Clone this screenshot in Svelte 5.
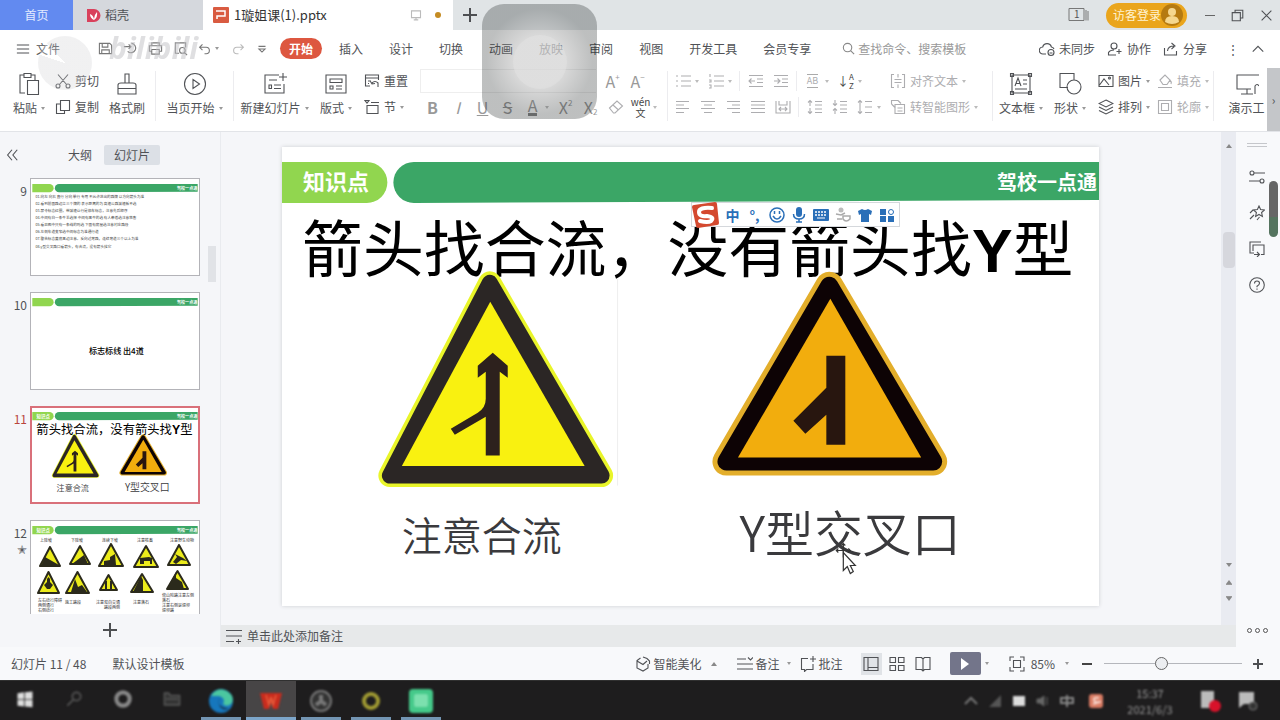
<script>
  let zoom = $state(41);
  let search = $state('');

  const menuTabs = ['插入', '设计', '切换', '动画', '放映', '审阅', '视图', '开发工具', '会员专享'];

  // Line icons, each drawn on a 16 or 24 unit grid.
  const icons = {
    menu: [16, 'M1 3.500h14M1 8h14M1 12.500h14'],
    save: [16, 'M1.500 2.500h11l2 2v9h-13zM4.500 2.500v4h6v-4M4 13.500v-4h8v4'],
    exportDoc: [16, 'M1 6h7M6 3.500L8.500 6 6 8.500M9 2.500a5 5 0 1 1-4 8.500'],
    print: [16, 'M4 5V2h8v3M4 11H1.500V5h13v6H12M4 9h8v5H4z'],
    preview: [16, 'M13.500 7V2h-11v11h4M13 10a3 3 0 1 1-6 0 3 3 0 0 1 6 0M12 12l3 3'],
    undo: [16, 'M2 6.500h8a4 4 0 0 1 0 8H8M5.500 3L2 6.500 5.500 10'],
    redo: [16, 'M14 6.500H6a4 4 0 0 0 0 8h2M10.500 3L14 6.500 10.500 10'],
    more: [16, 'M4 5h8M4.500 8L8 11.500 11.500 8z'],
    search: [16, 'M11.500 7a4.500 4.500 0 1 1-9 0 4.500 4.500 0 0 1 9 0M10.500 10.500L14 14'],
    cloud: [16, 'M7 13H4a3.500 3.500 0 0 1-.3-7 4.500 4.500 0 0 1 8.700 0A3 3 0 0 1 15 8M15 11.500a3 3 0 1 1-6 0 3 3 0 0 1 6 0M10.500 12h3'],
    people: [16, 'M10 5a3 3 0 1 1-6 0 3 3 0 0 1 6 0M9 14H1.500v-2.500Q3 9 7 9M12 8v5M9.500 10.500h5'],
    share: [16, 'M1.500 7v7h12v-4M4.500 10Q5 5 11 5M8.500 2L12 5 8.500 8'],
    up: [16, 'M2 11l6-6 6 6'],
    cut: [16, 'M3 1.500l8.500 10M13 1.500l-8.500 10M5 13a2 2 0 1 1-4 0 2 2 0 0 1 4 0M15 13a2 2 0 1 1-4 0 2 2 0 0 1 4 0'],
    copy: [16, 'M5.500 1.500h9v10h-9zM5.500 5h-4v9.500h8v-3'],
    reset: [16, 'M6 13H1.500V2h13v5M1.500 5h13M4 8h3M8 10q3-3 6 0v4M6.500 8.500L8 11l3-.5M4 10.500h1'],
    section: [16, 'M1 1.500h4L3 4zM7 3.500h8M3 6.500h11v8H3z'],
    bullets: [16, 'M6 3h10M6 8h10M6 13h10M1 3h2M1 8h2M1 13h2'],
    numbers: [16, 'M6 3h10M6 8h10M6 13h10M2 1v3M1 7h2v2H1M1 12h2v3H1'],
    outdent: [16, 'M1 2.500h14M9 6h6M9 9.500h6M1 13.500h14M1 8h6M3.500 5.500L1 8l2.500 2.500'],
    indent: [16, 'M1 2.500h14M9 6h6M9 9.500h6M1 13.500h14M1 8h6M4.500 5.500L7 8l-2.500 2.500'],
    left: [16, 'M1 2.500h13M1 6h8M1 9.500h13M1 13.500h8'],
    center: [16, 'M1 2.500h14M4 6h8M1 9.500h14M4 13.500h8'],
    right: [16, 'M2 2.500h13M7 6h8M2 9.500h13M7 13.500h8'],
    justify: [16, 'M1 2.500h14M1 6h14M1 9.500h14M1 13.500h14'],
    spread: [16, 'M1 2v12h14V2M4 2v4h8V2M4 10h8M6 8l-2 2 2 2M10 8l2 2-2 2'],
    lineUp: [16, 'M3 7V1.500M1 3.500l2-2 2 2M3 9v5.500M1 12.500l2 2 2-2M8 2.500h7M8 6h7M8 10h7M8 13.500h7'],
    lineDown: [16, 'M3 1v5.500M1 4.500l2 2 2-2M3 15V9.500M1 11.500l2-2 2 2M8 2.500h7M8 6h7M8 10h7M8 13.500h7'],
    lineBoth: [16, 'M3 1.500v13M1 3.500l2-2 2 2M1 12.500l2 2 2-2M8 2.500h7M8 8h7M8 13.500h7'],
    alignText: [16, 'M4 1.500H1.500v13H4M12 1.500h2.500v13H12M4.500 6.500h7M4.500 9.500h7M8 1v3.500M8 15v-3.500'],
    smart: [16, 'M1.500 5V1.500h7M1.500 5l4 4M5 5.500h9.500v9H5zM7.500 9h5M7.500 12h5M8 1.500l3 3'],
    picture: [16, 'M1 2.500h14v11H1zM1.500 12l4.500-6 5 6M11.500 6.500h.1M12.500 5a1 1 0 1 1-2 0 1 1 0 0 1 2 0'],
    layers: [16, 'M8 1l7 3.500-7 3.500-7-3.500zM1 8l7 3.500L15 8M1 11.500L8 15l7-3.500'],
    fill: [16, 'M3 7l5-5 5 5-3 4.500H6zM1 14.500h14M13 7q2 2 1 4'],
    outline: [16, 'M1.500 1.500h13v13h-13zM4.500 4.500h7v7h-7z'],
    paste: [24, 'M8 21H3V3h4M14 3h4v5M7 1.500h7v4H7zM10.500 8.500h11v14h-11z'],
    brush: [24, 'M10 11V2h4v9M3 22V13q0-2 3-2h12q3 0 3 2v9zM3 16.500h18'],
    play: [24, 'M22.500 12a10.500 10.500 0 1 1-21 0 10.500 10.500 0 0 1 21 0M10 7.500l6.500 4.500-6.500 4.500z'],
    newSlide: [24, 'M16 3H2v18h19v-9M20 1v8M16 5h8M6 8h8M6 13h2.500v3.500H6zM11 13h7M11 16.500h7'],
    layout: [24, 'M2 3h20v18H2zM6 7h12v3.500H6zM6 14h3v3H6zM12 14h6M12 17h6'],
    textbox: [24, 'M3 3h18v18H3zM1.500 1.500h3v3h-3zM19.500 1.500h3v3h-3zM1.500 19.500h3v3h-3zM19.500 19.500h3v3h-3zM6 14l3-8 3 8M7 11.500h4M14 8h4M14 12h4M6 17h12'],
    shapes: [24, 'M10 15.500H2v-14h14v6M23 15a7 7 0 1 1-14 0 7 7 0 0 1 14 0'],
    screen: [24, 'M24 3H2v14h14M12 17v5M6 22h12M20 22v-8q2-3 4 0'],
    sliders: [16, 'M5 4h11M0 12h11M5 4a2 2 0 1 1-4 0 2 2 0 0 1 4 0M15 12a2 2 0 1 1-4 0 2 2 0 0 1 4 0'],
    star: [16, 'M10 1l1.600 3.500 3.900.4-2.900 2.600.8 3.900L10 9.500l-3.400 1.900.8-3.900-2.900-2.600 3.900-.4zM1 8l3-3M1 14l4-4M8 15l2.500-3'],
    transfer: [16, 'M5 12H1V1h11M12 13.500h3V4H4v6M5 13.500h5M8 11l2.500 2.500L8 16'],
    help: [16, 'M15.300 8A7.300 7.300 0 1 1 .7 8a7.300 7.300 0 0 1 14.600 0M5.500 6.500Q5.500 4 8 4t2.500 2.300Q10.500 8 8 9.200v1M8 11.500v1.200'],
    magic: [16, 'M5.500 2L2 4.500V12l6 3 5-3V8M2 5l6 3.500L12 5M8 1l4 1.500L14.500 5v3'],
    notes: [16, 'M0 3h9M0 8h16M0 13h16M11 1.500l2.500 2.500L16 1.500'],
    comment: [16, 'M8 2.500H1.500v11h3v2l2-2H13V8M13 0v6M10 3h6'],
    normal: [16, 'M1 1.500h14v13H1zM5 1.500v13M5 11.500h10'],
    grid: [16, 'M1 1.500h5.500v5H1zM9.500 1.500H15v5H9.500zM1 9.500h5.500v5H1zM9.500 9.500H15v5H9.500z'],
    book: [16, 'M8 3v12M8 3L6.500 1.500H1v12h5.500L8 15l1.500-1.500H15v-12H9.500z'],
    fit: [16, 'M1 5V1h4M11 1h4v4M15 11v4h-4M5 15H1v-4M4.500 4.500h7v7h-7z'],
    addNote: [16, 'M0 2.500h16M0 8h16M0 13.500h8M12.500 11v5M10 13.500h5'],
    monitor: [16, 'M2 2.500h12v9H2zM8 11.500v3M5 14.500h6'],
    double: [16, 'M8 2L3 8l5 6M14 2L9 8l5 6'],
    windows: [16, 'M5 4V1.500h9.500V11H12M1.500 4.500h10v10h-10z'],
    close: [16, 'M2 2l12 12M14 2L2 14'],
    eraser: [16, 'M1.500 9l7.500-7 5.500 5-7.500 7H5.500zM5 6l5.500 5']
  };

  const thumbLines = [
    '01.向左 向右 直行 分向 单行 专用 不允许进出的路牌 以方向箭头为准',
    '02.看到前面路边立三个牌的 表示距离的为 高速公路减速板不选',
    '03.禁令标志红圈，带减速让行是停车标志，注意先后顺序',
    '04.中间有白一条牛羊选择 中间有黑牛的选 有人牵着选注意牲畜',
    '05.看见图中只有一条线的则选 下面有房屋选注意村庄路段',
    '06.左侧车道变窄选中间标志为准通行道',
    '07.警告标志黄底黑边注意。反向过弯路，连续弯道三个以上为准',
    '08.y型交叉路口看箭头，有合流，没有箭头找它'
  ];

  // left, right, top, bottom, pictogram
  const miniSigns = [
    [39, 63, 545, 568, 'M42 566l4-9 14 8v1z'],
    [69, 93, 544, 566, 'M73 564l12-9 4 9z'],
    [98, 126, 542, 568, 'M105 565v-4l6-1v-3l5-3 1 11z'],
    [133, 161, 544, 569, 'M141 564v-6l9-1 3 1v6h-2v-3h-6v3z'],
    [167, 193, 543, 567, 'M174 562l4-5-2-3 8 4 4 3-6-1-5 4z'],
    [37, 62, 570, 595, 'M48 579l1.500-2 1.500 2v3l3 3-3 4h-3l-3-4 3-3z'],
    [65, 92, 570, 595, 'M72 592l4-13 3 8 4-2 5 7z'],
    [99, 120, 573, 592, 'M106 589v-8h2v8zM111 589v-8h2v8z'],
    [130, 156, 572, 594, 'M134 592l8-16 2 4v12z'],
    [166, 191, 569, 591, 'M177 572v6l6 4 2 7h-17z']
  ];
  const miniCaptions = [
    [41, 542, '上陡坡'], [72, 542, '下陡坡'], [103, 542, '连续下坡'], [138, 542, '注意牲畜'], [171, 542, '注意野生动物'],
    [39, 602, '左右绕行障碍'], [39, 607, '两侧通行'], [39, 612, '右侧绕行'],
    [66, 604, '施工路段'], [97, 604, '注意双向交通'], [105, 609, '路段两侧'], [134, 604, '注意落石'],
    [163, 597, '傍山险路注意左侧'], [163, 602, '落石'], [163, 607, '注意右侧是堤坝'], [163, 612, '堤坝路']
  ];
</script>

{#snippet icon(name, size = 16)}
  <svg class="icon" width={size} height={size} viewBox="0 0 {icons[name][0]} {icons[name][0]}" aria-hidden="true"><path d={icons[name][1]} /></svg>
{/snippet}

{#snippet caret()}<i class="caret"></i>{/snippet}

{#snippet header(label)}
  <path d="M0 15h85a20 20 0 0 1 0 41H0z" fill="#91d64f" />
  <path d="M818 15H132a20.500 20.500 0 0 0 0 41l686-3z" fill="#3ba666" />
  {#if label}<text x="21" y="43" class="band" font-size="22">知识点</text>{/if}
  <text x="716" y="43" class="band" font-size="20">驾校一点通</text>
{/snippet}

{#snippet currentSlide()}
  {@render header(true)}
  <text x="20" y="125" class="title" font-size="61">箭头找合流，没有箭头找<tspan class="latin">Y</tspan>型</text>
  <g stroke-linejoin="round">
    <path d="M208 136L108 329h212z" fill="#e9f52a" stroke="#e9f52a" stroke-width="23" />
    <path d="M208 136L108 329h212z" fill="#2b2625" stroke="#2b2625" stroke-width="16" />
    <path d="M208.500 155L120 319.500h183z" fill="#f9f110" />
    <path d="M211 206l15 13v12l-8-6v84h-14v-39l-31 18-4-6 27-16q8-5 8-14v-27l-8 6v-12z" fill="#2d211d" />
    <path d="M548 139L445 315h207z" fill="#e3ae2b" stroke="#e3ae2b" stroke-width="28" />
    <path d="M548 139L445 315h207z" fill="#0d0305" stroke="#0d0305" stroke-width="18" />
    <path d="M549 152L456.500 311H640z" fill="#f2ad0d" />
    <path d="M545 209h19v89h-19v-30l-21 19-12-13 33-33z" fill="#28160f" />
  </g>
  <text x="120" y="404" class="caption" font-size="40">注意合流</text>
  <text x="458" y="405" class="caption" font-size="49">Y型交叉口</text>
{/snippet}

<div class="window">
  <header class="tabbar">
    <a class="home" href="#home">首页</a>
    <a class="docker" href="#docker">
      <svg width="14" height="14" viewBox="0 0 14 14" aria-hidden="true"><path d="M0 1h7a6.500 6.500 0 0 1 0 13H0z" fill="#d9415c" /><path d="M7 12Q3 10 3 6q3 1 4 5 0-4 3-7 1 5-3 8" fill="#fff" /></svg>
      稻壳
    </a>
    <a class="doc" href="#doc">
      <svg width="16" height="16" viewBox="0 0 16 16" aria-hidden="true"><rect width="16" height="16" rx="1" fill="#d95b41" /><path d="M3 4h9v5H4v3" fill="none" stroke="#fff" stroke-width="1.500" /></svg>
      <span>1璇姐课(1).pptx</span>
      <span class="pale">{@render icon('monitor', 12)}</span>
      <i class="dirty"></i>
    </a>
    <button class="add" aria-label="新建标签"></button>
    <div class="system">
      <svg width="22" height="16" viewBox="0 0 22 16" aria-hidden="true"><path d="M1 1.500h15v12H1zM18 3v10.500M20 4v9.500" fill="none" stroke="#777" /><text x="6" y="11" font-size="10" fill="#555">1</text></svg>
      <button class="login">访客登录
        <svg width="22" height="22" viewBox="0 0 22 22" aria-hidden="true"><circle cx="11" cy="11" r="11" fill="#b57a10" /><circle cx="11" cy="8" r="4" fill="#f5d78e" /><path d="M4 18q0-6 7-6t7 6q-7 4-14 0" fill="#f5d78e" /></svg>
      </button>
      <button aria-label="最小化"><i class="minus"></i></button>
      <button aria-label="还原">{@render icon('windows', 13)}</button>
      <button aria-label="关闭">{@render icon('close', 13)}</button>
    </div>
  </header>

  <nav class="menubar">
    <button class="file">{@render icon('menu', 14)}文件</button>
    <div class="quick">
      <button aria-label="保存">{@render icon('save', 15)}</button>
      <button aria-label="输出">{@render icon('exportDoc', 15)}</button>
      <button aria-label="打印">{@render icon('print', 15)}</button>
      <button aria-label="预览">{@render icon('preview', 15)}</button>
      <button aria-label="撤销">{@render icon('undo', 13)}</button>
      {@render caret()}
      <button class="pale" aria-label="恢复">{@render icon('redo', 13)}</button>
      <button aria-label="更多">{@render icon('more', 14)}</button>
    </div>
    <div class="tabs">
      <button class="start">开始</button>
      {#each menuTabs as tab}<button>{tab}</button>{/each}
    </div>
    <label class="find">{@render icon('search', 15)}<input bind:value={search} placeholder="查找命令、搜索模板" aria-label="查找命令" /></label>
    <div class="account">
      <button>{@render icon('cloud')}未同步</button>
      <button>{@render icon('people')}协作</button>
      <button>{@render icon('share')}分享</button>
      <button aria-label="选项">⋮</button>
      <button aria-label="收起">{@render icon('up', 14)}</button>
    </div>
  </nav>

  <section class="ribbon" aria-label="开始">
    <button class="big w40">{@render icon('paste', 24)}<span>粘贴{@render caret()}</span></button>
    <div class="stack">
      <button>{@render icon('cut')}剪切</button>
      <button>{@render icon('copy')}复制</button>
    </div>
    <button class="big w54">{@render icon('brush', 24)}<span>格式刷</span></button>
    <hr />
    <button class="big w76">{@render icon('play', 24)}<span>当页开始{@render caret()}</span></button>
    <hr />
    <button class="big w78">{@render icon('newSlide', 24)}<span>新建幻灯片{@render caret()}</span></button>
    <button class="big w46">{@render icon('layout', 24)}<span>版式{@render caret()}</span></button>
    <div class="stack">
      <button>{@render icon('reset')}重置</button>
      <button>{@render icon('section')}节{@render caret()}</button>
    </div>
    <div class="rows font off">
      <div>
        <select aria-label="字体"><option></option></select>
        <button class="cell letter">A<sup>+</sup></button>
        <button class="cell letter">A<sup>−</sup></button>
      </div>
      <div>
        <button class="cell letter"><b>B</b></button>
        <button class="cell letter"><em>I</em></button>
        <button class="cell letter"><u>U</u></button>
        <button class="cell letter"><s>S</s></button>
        <button class="cell letter"><span class="tint">A</span></button>{@render caret()}
        <button class="cell letter">X<sup>2</sup></button>
        <button class="cell letter">X<sub>2</sub></button>
        <button class="cell" aria-label="清除格式">{@render icon('eraser')}</button>
        <button class="cell pinyin"><span>wén</span><span>文</span></button>{@render caret()}
      </div>
    </div>
    <hr />
    <div class="rows off">
      <div>
        <button class="cell" aria-label="项目符号">{@render icon('bullets')}</button>{@render caret()}
        <button class="cell" aria-label="编号">{@render icon('numbers')}</button>{@render caret()}
        <hr />
        <button class="cell" aria-label="减少缩进">{@render icon('outdent')}</button>
        <button class="cell" aria-label="增加缩进">{@render icon('indent')}</button>
        <hr />
        <button class="cell"><span class="ab">AB</span></button>{@render caret()}
        <button class="cell dark">↓<span class="az">A<br />Z</span></button>{@render caret()}
      </div>
      <div>
        <button class="cell" aria-label="左对齐">{@render icon('left')}</button>
        <button class="cell" aria-label="居中">{@render icon('center')}</button>
        <button class="cell" aria-label="右对齐">{@render icon('right')}</button>
        <button class="cell" aria-label="两端对齐">{@render icon('justify')}</button>
        <button class="cell" aria-label="分散对齐">{@render icon('spread')}</button>
        <hr />
        <button class="cell" aria-label="增大行距">{@render icon('lineUp')}</button>
        <button class="cell" aria-label="减小行距">{@render icon('lineDown')}</button>
        <button class="cell" aria-label="行距">{@render icon('lineBoth')}</button>{@render caret()}
      </div>
    </div>
    <div class="stack off convert">
      <button>{@render icon('alignText')}对齐文本{@render caret()}</button>
      <button>{@render icon('smart')}转智能图形{@render caret()}</button>
    </div>
    <hr />
    <button class="big w54">{@render icon('textbox', 24)}<span>文本框{@render caret()}</span></button>
    <button class="big w46">{@render icon('shapes', 24)}<span>形状{@render caret()}</span></button>
    <div class="stack">
      <button>{@render icon('picture')}图片{@render caret()}</button>
      <button>{@render icon('layers')}排列{@render caret()}</button>
    </div>
    <div class="stack off">
      <button>{@render icon('fill')}填充{@render caret()}</button>
      <button>{@render icon('outline')}轮廓{@render caret()}</button>
    </div>
    <hr />
    <button class="big cropped">{@render icon('screen', 24)}<span>演示工</span></button>
    <button class="scroll-next" aria-label="向右">›</button>
  </section>

  <main class="workspace">
    <aside class="side">
      <div class="side-head">
        <button aria-label="折叠">{@render icon('double', 14)}</button>
        <button class="outline-tab">大纲</button>
        <button class="active">幻灯片</button>
      </div>
      <div class="thumbs">
        <div class="row"><span class="num">9</span>
          <svg class="thumb" viewBox="0 0 818 460">
            {@render header(false)}
            {#each thumbLines as line, i}<text x="16" y={84 + i * 35} font-size="18" fill="#444">{line}</text>{/each}
          </svg>
        </div>
        <div class="row"><span class="num">10</span>
          <svg class="thumb" viewBox="0 0 818 460">
            {@render header(false)}
            <text x="280" y="290" font-size="40" font-weight="500">标志标线 出4道</text>
          </svg>
        </div>
        <div class="row current"><span class="num">11</span>
          <svg class="thumb" viewBox="0 0 818 460">{@render currentSlide()}</svg>
        </div>
        <div class="row"><span class="num">12<br />✭</span>
          <svg class="thumb" viewBox="33 523 166 93">
            <svg x="33" y="523" width="166" height="93" viewBox="0 0 818 460">{@render header(true)}</svg>
            {#each miniSigns as [l, r, t, b, d]}
              <path d="M{(l + r) / 2} {t + 2}L{l + 2} {b - 2}H{r - 2}z" fill="#ecec1c" stroke="#2b2a1c" stroke-width="2" stroke-linejoin="round" />
              <path {d} fill="#2b2a1c" />
            {/each}
            {#each miniCaptions as [x, y, t]}<text {x} {y} font-size="4" fill="#333">{t}</text>{/each}
          </svg>
        </div>
        <i class="side-scroll"></i>
      </div>
      <button class="new-slide add" aria-label="新建幻灯片"></button>
    </aside>

    <section class="editor">
      <div class="canvas">
        <div class="stage">
          <div class="slide">
            <svg viewBox="0 0 818 460">
              {@render currentSlide()}
              <path d="M336 132v207" stroke="#eee" />
              <g stroke="#333" fill="#fff" stroke-width="1.200">
                <path d="M555 404h14M562 397v14M557 402l-2 2 2 2M567 402l2 2-2 2M560 399l2-2 2 2" fill="none" />
                <path d="M562 406v18l4-4 3 7 3-2-3-6h5z" />
              </g>
            </svg>
            <div class="ime" role="toolbar" aria-label="输入法">
              <svg class="sogou" width="28" height="28" viewBox="0 0 28 28" aria-hidden="true"><path d="M2 4L23 1q2 0 2 2l2 19q0 2-2 2L6 27q-2 0-2-2L0 6q0-2 2-2z" fill="#d4492f" /><path d="M20 7Q7 6 7 11t8 4q8 1 4 5-3 2-11 0" fill="none" stroke="#fff" stroke-width="4" stroke-linecap="round" /></svg>
              <b>中</b>
              <b>°,</b>
              <svg width="16" height="16" viewBox="0 0 16 16"><circle cx="8" cy="8" r="7" fill="none" stroke="#2a6fb8" stroke-width="1.500" /><path d="M4 9q4 6 8 0M5.500 4v3M10.500 4v3" fill="none" stroke="#2a6fb8" stroke-width="1.500" /></svg>
              <svg width="16" height="16" viewBox="0 0 16 16"><rect x="5" width="6" height="10" rx="3" fill="#2a6fb8" /><path d="M2.500 7q0 5 5.500 5t5.500-5M8 12v3M5 15h6" fill="none" stroke="#2a6fb8" stroke-width="1.500" /></svg>
              <svg width="16" height="16" viewBox="0 0 16 16"><rect y="2" width="16" height="12" rx="1" fill="#2a6fb8" /><path d="M2 5h12M2 8h12" stroke="#fff" stroke-dasharray="2 1" stroke-width="1.500" /><path d="M4 11h8" stroke="#fff" /></svg>
              <svg width="16" height="16" viewBox="0 0 16 16"><circle cx="6" cy="3" r="2.500" fill="#bbb" /><path d="M1 7l5 1 4-2M2 12h5M8 9h7v3q-4 4-7 0z" fill="none" stroke="#aaa" stroke-width="1.500" /></svg>
              <svg width="16" height="16" viewBox="0 0 16 16"><path d="M5 2q3 2 6 0l4 2-1 4-2-1v8H4V7L2 8 1 4z" fill="#2a6fb8" /></svg>
              <svg width="16" height="16" viewBox="0 0 16 16"><path d="M1 2h6v6H1zM1 9h6v6H1zM9 9h6v6H9z" fill="#2a6fb8" /><circle cx="12" cy="5" r="2.500" fill="none" stroke="#2a6fb8" /></svg>
            </div>
          </div>
        </div>
        <div class="vscroll"><i class="tri"></i><i class="knob"></i><span><i class="tri down"></i><i class="tri pair"></i><i class="tri down pair"></i></span></div>
      </div>
      <button class="notes">{@render icon('addNote')}单击此处添加备注</button>
    </section>

    <aside class="rail">
      <i class="grip"></i>
      <button aria-label="对象属性">{@render icon('sliders')}</button>
      <button aria-label="动画窗格">{@render icon('star')}</button>
      <button aria-label="切换窗格">{@render icon('transfer')}</button>
      <button aria-label="帮助">{@render icon('help')}</button>
      <button class="dots" aria-label="更多"><i></i><i></i><i></i></button>
      <span class="edge-scroll"></span>
    </aside>
  </main>

  <footer class="status">
    <span>幻灯片 11 / 48</span>
    <span class="template">默认设计模板</span>
    <div class="status-tools">
      <button class="beauty">{@render icon('magic')}智能美化<i class="tri"></i></button>
      <button>{@render icon('notes')}备注{@render caret()}</button>
      <button class="remarks">{@render icon('comment')}批注</button>
      <button class="view on" aria-label="普通视图">{@render icon('normal')}</button>
      <button class="view" aria-label="幻灯片浏览">{@render icon('grid')}</button>
      <button class="view" aria-label="阅读视图">{@render icon('book')}</button>
      <button class="present" aria-label="放映"><svg width="10" height="12" viewBox="0 0 10 12"><path d="M1 0l8 6-8 6z" fill="#fff" /></svg></button>{@render caret()}
      <button class="fit">{@render icon('fit')}85%{@render caret()}</button>
      <button aria-label="缩小"><i class="minus bold"></i></button>
      <input type="range" min="0" max="100" bind:value={zoom} aria-label="缩放" />
      <button class="add small" aria-label="放大"></button>
    </div>
  </footer>

  <footer class="taskbar">
    <button aria-label="开始菜单"><svg viewBox="0 0 24 24"><path d="M3 5l8-1v8H3zM12 4l9-1v9h-9zM3 13h8v8l-8-1zM12 13h9v9l-9-1z" fill="#ddd" /></svg></button>
    <button aria-label="搜索"><svg viewBox="0 0 24 24"><path d="M4 20l7-7M20 9a5 5 0 1 1-10 0 5 5 0 0 1 10 0" fill="none" stroke="#555" stroke-width="2" /></svg></button>
    <button aria-label="助手"><svg viewBox="0 0 24 24"><circle cx="12" cy="12" r="8" fill="none" stroke="#888" stroke-width="5" /></svg></button>
    <button aria-label="任务视图"><svg viewBox="0 0 24 24"><path d="M3 5h5l2 3h11v11H3zM5 12h14" fill="#333" stroke="#555" stroke-width="2" /></svg></button>
    <button class="run" aria-label="浏览器"><svg viewBox="0 0 24 24"><circle cx="12" cy="12" r="12" fill="#1677bd" /><path d="M2 7Q8-3 18 2q8 5 5 12-5 5-9 1 3-6-4-8-5 0-8 0" fill="#4bc7a0" /><path d="M11 9q-4 5 2 9 4 2 7 1-2 2-6 1-7-4-3-11" fill="#1b2731" /></svg></button>
    <button class="run front" aria-label="演示"><svg viewBox="0 0 24 24"><path d="M1 4h22l-4 16h-5l-2-6-2 6H5z" fill="#c92b1d" /><path d="M7 6l3 10 2-8 2 8 3-10" fill="none" stroke="#e8603e" stroke-width="1.500" /></svg></button>
    <button class="run" aria-label="录屏"><svg viewBox="0 0 24 24"><circle cx="12" cy="12" r="10" fill="#333" stroke="#777" stroke-width="2" /><path d="M12 6v6l-5 4M12 12l5 4" stroke="#777" stroke-width="4" /></svg></button>
    <button class="run" aria-label="音乐"><svg viewBox="0 0 24 24"><circle cx="12" cy="12" r="7" fill="none" stroke="#a09a32" stroke-width="4" /></svg></button>
    <button class="run" aria-label="应用"><svg viewBox="0 0 24 24"><rect width="24" height="24" rx="4" fill="#45c98a" /><rect x="5" y="5" width="14" height="13" rx="2" fill="#7ce0ae" /></svg></button>
    <div class="tray">
      <svg viewBox="0 0 16 16"><path d="M2 11l6-6 6 6" fill="none" stroke="#777" stroke-width="2" /></svg>
      <svg viewBox="0 0 16 16"><path d="M2 14L14 2v12z" fill="#555" /></svg>
      <svg viewBox="0 0 16 16"><rect x="2" y="3" width="12" height="10" fill="#ddd" /></svg>
      <svg viewBox="0 0 16 16"><path d="M2 6h3l4-3v10l-4-3H2zM12 4v8" fill="#666" stroke="#666" /></svg>
      <svg viewBox="0 0 16 16"><path d="M2 5h12v5H2zM8 2v12" fill="none" stroke="#888" stroke-width="2" /></svg>
      <svg class="gap" viewBox="0 0 16 16"><rect x="1" y="1" width="14" height="14" rx="3" fill="#d97b63" /><path d="M11 5Q5 4 6 7t5 2-6 2" fill="none" stroke="#f6d5cb" stroke-width="2" /></svg>
      <div class="clock"><span>15:37</span><span>2021/6/3</span></div>
      <svg class="wide" viewBox="0 0 24 24"><rect x="2" y="2" width="13" height="17" fill="#bbb" /><circle cx="16" cy="17" r="6" fill="#d8122a" /></svg>
      <svg class="wide" viewBox="0 0 24 24"><path d="M3 3h15v12H8l-5 4z" fill="#bbb" /><circle cx="17" cy="17" r="4" fill="#333" stroke="#777" /></svg>
    </div>
  </footer>

  <div class="watermark" aria-hidden="true"><i></i><span>bilibili</span></div>
  <div class="assist" aria-hidden="true"><i></i></div>
</div>

<style>
  :global(body) { margin: 0; overflow: hidden; }
  .window {
    position: relative;
    display: flex;
    flex-direction: column;
    height: 100vh;
    overflow: hidden;
    font: 12px/16px "Noto Sans CJK SC", sans-serif;
    color: #505256;
    background: #f5f6f9;
  }
  button, input, select { font: inherit; color: inherit; background: none; border: 0; padding: 0; margin: 0; }
  button { display: inline-flex; align-items: center; justify-content: center; white-space: nowrap; flex: none; }
  a { color: inherit; text-decoration: none; }
  svg { flex: none; display: block; }
  .icon { fill: none; stroke: currentColor; stroke-width: 1.1; }
  .icon path { vector-effect: non-scaling-stroke; }
  .pale { color: #bbb; }
  .caret { flex: none; width: 0; height: 0; border: 2px solid transparent; border-top: 3px solid #999; border-bottom: 0; margin: 0 0 0 4px; }
  .minus { width: 10px; height: 1px; background: #666; }
  .minus.bold { height: 2px; background: #444; }
  .add {
    width: 14px; height: 14px;
    background: linear-gradient(#4d4f52, #4d4f52) center / 100% 2px no-repeat, linear-gradient(#4d4f52, #4d4f52) center / 2px 100% no-repeat;
  }
  .add.small { width: 10px; height: 10px; }
  hr { flex: none; width: 1px; height: 20px; margin: 0 4px; border: 0; background: #ececef; }

  .tabbar { display: flex; align-items: center; flex: none; height: 30px; background: #e0e4e6; }
  .home, .docker, .doc { display: flex; align-items: center; height: 100%; box-sizing: border-box; }
  .home { width: 73px; justify-content: center; background: #628af0; color: #e4ebff; }
  .docker { width: 130px; padding-left: 14px; gap: 4px; background: #d5d8dd; }
  .doc { width: 250px; padding: 0 12px 0 10px; gap: 5px; background: #fff; color: #333; margin-right: 10px; font-size: 13px; }
  .doc .pale { margin-left: auto; margin-right: 8px; }
  .dirty { width: 6px; height: 6px; border-radius: 50%; background: #c58c23; }
  .system { display: flex; align-items: center; gap: 16px; margin-left: auto; padding-right: 7px; }
  .login { height: 25px; padding: 0 4px 0 7px; margin-right: 2px; border-radius: 13px; background: #eaa51c; color: #fff3cf; }

  .menubar { display: flex; align-items: center; flex: none; height: 37px; background: #fff; padding: 0 15px 0 16px; box-sizing: border-box; }
  .file { gap: 6px; }
  .quick { display: flex; align-items: center; gap: 10px; margin-left: 38px; color: #777; }
  .quick .caret { margin: 0 3px 0 -6px; }
  .tabs { display: flex; align-items: center; gap: 26px; margin-left: 11px; }
  .start { height: 21px; padding: 0 9px; margin-right: -9px; border-radius: 11px; background: #dd5740; color: #fff; font-weight: 700; }
  .find { display: flex; align-items: center; gap: 2px; margin-left: 30px; color: #888; }
  .find input { width: 120px; outline: 0; }
  .find input::placeholder { color: #999; opacity: 1; }
  .account { display: flex; align-items: center; gap: 12px; margin-left: auto; }
  .account button { gap: 4px; }
  .account button:nth-child(4) { margin-left: 8px; }

  .ribbon { display: flex; align-items: flex-start; flex: none; height: 65px; padding: 2px 0 0 8px; box-sizing: border-box; background: #fff; border-bottom: 1px solid #e2e4e8; overflow: hidden; }
  .ribbon > hr { height: 50px; margin: 2px 2px 0; }
  .big { flex-direction: column; gap: 4px; padding-top: 3px; }
  .big span { display: flex; align-items: center; }
  .w40 { width: 42px; }
  .w46 { width: 46px; }
  .w54 { width: 52px; }
  .w76 { width: 73px; }
  .w78 { width: 77px; }
  .stack, .rows { display: flex; flex-direction: column; flex: none; gap: 2px; }
  .stack { padding: 0 2px 0 5px; }
  .stack button { height: 24px; gap: 4px; justify-content: flex-start; }
  .stack .caret { margin-left: 0; }
  .convert { padding-right: 12px; }
  .off { color: #adadb0; }
  .off .caret { border-top-color: #bbb; }
  .rows > div { display: flex; align-items: center; height: 24px; }
  .rows .caret { margin: 0 4px 0 0; }
  .rows hr { margin: 0 3px; }
  .font { padding: 0 4px 0 10px; }
  .font select { width: 176px; height: 24px; appearance: none; border: 1px solid #eee; border-right: 0; margin-right: 4px; box-sizing: border-box; }
  .cell { width: 25px; height: 24px; }
  .letter { font-size: 16px; color: #999; }
  .letter sup, .letter sub { font-size: 8px; line-height: 8px; }
  .letter sup { align-self: flex-start; margin-top: 4px; }
  .letter sub { align-self: flex-end; margin-bottom: 3px; }
  .tint { line-height: 15px; border-bottom: 3px solid #888; }
  .pinyin { flex-direction: column; color: #444; font-size: 10px; line-height: 11px; }
  .ab { font-size: 9px; line-height: 12px; border: solid #aaa; border-width: 1px 0; }
  .dark { color: #444; }
  .az { font-size: 8px; line-height: 9px; }
  .cropped { width: 37px; margin-left: 12px; }
  .scroll-next { align-self: stretch; width: 13px; margin-left: auto; margin-top: -1px; background: #c4c6c9; }

  .workspace { display: flex; flex: 1; min-height: 0; }
  .side { display: flex; flex-direction: column; flex: none; width: 220px; border-right: 1px solid #e9ebef; }
  .side-head { display: flex; align-items: center; flex: none; height: 46px; padding-left: 5px; }
  .outline-tab { margin: 0 12px 0 49px; }
  .side-head .active { width: 56px; height: 20px; background: #dce0e6; border-radius: 2px; }
  .thumbs { position: relative; display: flex; flex-direction: column; gap: 16px; flex: 1; min-height: 0; overflow: hidden; }
  .row { display: flex; flex: none; gap: 3px; }
  .num { width: 27px; padding-top: 5px; text-align: right; }
  .thumb { width: 170px; height: 98px; box-sizing: border-box; padding: 2px 1px 1px; border: 1px solid #b3b3b8; background: #fff; }
  .current .thumb { border: 2px solid #d9707a; padding: 1px 0 0; }
  .current .num { color: #b8453c; }
  .side-scroll { position: absolute; right: 4px; top: 68px; width: 8px; height: 36px; background: #e1e3e7; }
  .new-slide { align-self: center; margin: 9px 0 10px; }

  .editor { display: flex; flex-direction: column; flex: 1; min-width: 0; }
  .canvas { display: flex; flex: 1; min-height: 0; }
  .stage { flex: 1; min-width: 0; padding: 15px 122px 0 61px; }
  .slide { position: relative; background: #fff; box-shadow: 0 0 4px #ccced2; }
  .slide > svg { width: 100%; height: auto; }
  .band { fill: #fff; font-weight: 700; }
  .title { fill: #000; font-weight: 400; }
  .latin { font-family: "Liberation Sans", sans-serif; font-weight: 700; }
  .caption { fill: #3a3a3d; font-weight: 350; }
  .ime { position: absolute; left: 50%; top: 55px; display: flex; align-items: center; gap: 6px; height: 25px; padding-right: 4px; background: #fff; border: 1px solid #d5d8dc; box-sizing: border-box; color: #2a6fb8; }
  .ime b { width: 16px; font-size: 14px; text-align: center; }
  .sogou { margin-right: -1px; }
  .vscroll { display: flex; flex-direction: column; align-items: center; flex: none; width: 15px; padding: 12px 0 24px; background: #e9ebf1; box-sizing: border-box; }
  .tri { width: 0; height: 0; border: 3px solid transparent; border-bottom: 4px solid #888; border-top: 0; }
  .tri.down { transform: rotate(180deg); }
  .tri.pair { box-shadow: 0 1px #999; }
  .knob { width: 12px; height: 36px; margin-top: 84px; border-radius: 4px; background: #d6d7dd; }
  .vscroll span { display: flex; flex-direction: column; gap: 13px; margin-top: auto; }
  .notes { height: 22px; justify-content: flex-start; gap: 5px; padding-left: 5px; background: #e7e9ea; }

  .rail { position: relative; display: flex; flex-direction: column; align-items: center; flex: none; gap: 20px; width: 44px; padding: 11px 2px 14px 0; box-sizing: border-box; background: #f8f9fb; }
  .grip { width: 20px; height: 2px; border: solid #c5c7cb; border-width: 1px 0; margin-bottom: 2px; }
  .dots { gap: 3px; margin-top: auto; }
  .dots i { width: 3px; height: 3px; border: 1px solid #555; border-radius: 50%; }
  .edge-scroll { position: absolute; right: 2px; top: 49px; width: 9px; height: 56px; border-radius: 5px; background: linear-gradient(#666 65%, #55745f 65%); }

  .status { display: flex; align-items: center; flex: none; height: 33px; padding: 0 17px 0 11px; box-sizing: border-box; background: #f8f9fb; }
  .template { margin-left: 26px; }
  .status-tools { display: flex; align-items: center; margin-left: auto; }
  .status-tools button { gap: 3px; }
  .beauty { margin-right: 20px; }
  .beauty .tri { margin-left: 6px; }
  .remarks { margin: 0 18px 0 9px; }
  .view { width: 21px; height: 22px; margin-right: 5px; }
  .view.on { background: #e0e3e7; }
  .status-tools .present { width: 31px; height: 23px; margin-left: 11px; background: #73758a; border-radius: 2px; }
  .status-tools .fit { margin: 0 13px 0 20px; gap: 6px; }
  input[type="range"] { appearance: none; width: 138px; height: 16px; margin: 0 11px 0 12px; background: linear-gradient(#b5b7bc, #b5b7bc) center / 100% 1px no-repeat; }
  input[type="range"]::-webkit-slider-thumb { appearance: none; width: 13px; height: 13px; border: 1px solid #666; border-radius: 50%; background: #eceef1; }

  .taskbar { display: flex; align-items: stretch; flex: none; height: 40px; box-sizing: border-box; border-top: 1px solid #303030; background: #1e1d1e; }
  .taskbar button { width: 49px; box-sizing: border-box; border-bottom: 3px solid transparent; }
  .taskbar button svg { width: 24px; height: 24px; filter: blur(1px); }
  .taskbar button:nth-of-type(-n+4) svg { width: 20px; height: 20px; }
  .taskbar .run { width: 50px; background: linear-gradient(#7395b3, #7395b3) center bottom / 40px 3px no-repeat; border: 0; }
  .taskbar .front { background: linear-gradient(#7ca5c9, #7ca5c9) center bottom / 100% 3px no-repeat, #474546; }
  .tray { display: flex; align-items: center; gap: 8px; margin-left: auto; padding-right: 20px; filter: blur(1px); color: #999; }
  .tray svg { width: 16px; height: 16px; }
  .tray .gap { margin: 0 6px 0 5px; }
  .tray .wide { width: 24px; height: 24px; margin-left: 5px; }
  .clock { display: flex; flex-direction: column; align-items: center; width: 64px; font-size: 11px; margin-right: 4px; }

  .watermark { position: absolute; left: 38px; top: 36px; display: flex; align-items: flex-start; pointer-events: none; color: #c0c0c4; opacity: .5; }
  .watermark i { width: 54px; height: 54px; border-radius: 50%; background: conic-gradient(#d0d0d3 80%, #fff 80% 88%, #d0d0d3 88%); opacity: .6; }
  .watermark span { margin-left: 17px; font: italic 700 30px/24px "Open Sans", sans-serif; }
  .assist { position: absolute; left: 482px; top: 4px; display: grid; place-items: center; width: 115px; height: 115px; border-radius: 22px; background: radial-gradient(circle, rgba(150, 150, 150, .35) 30%, rgba(20, 26, 26, .28) 65%); pointer-events: none; }
  .assist i { width: 54px; height: 54px; border-radius: 50%; background: rgba(225, 225, 225, .6); }
</style>
